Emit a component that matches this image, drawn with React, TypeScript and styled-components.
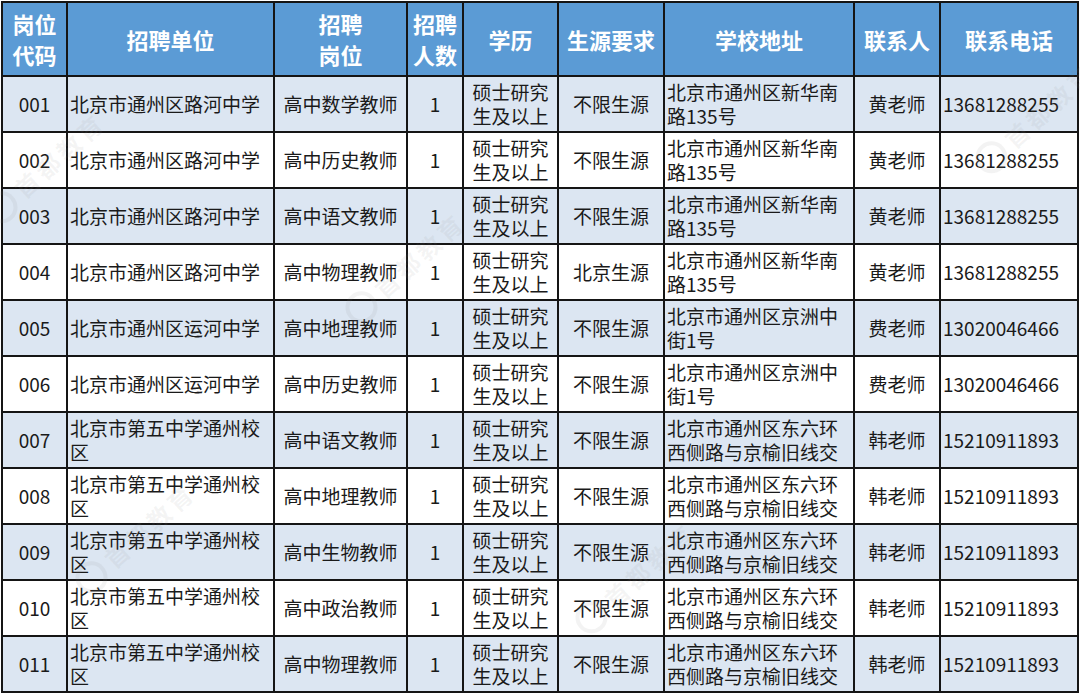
import React from "react";
import styled, { createGlobalStyle } from "styled-components";

const GlobalStyle = createGlobalStyle`
  html, body {
    margin: 0;
    padding: 0;
    background: #ffffff;
  }
  body {
    font-family: "Noto Sans CJK SC", "Noto Sans", sans-serif;
    color: #1a1a1a;
  }
`;

const Page = styled.div`
  position: relative;
  width: 1080px;
  height: 695px;
  padding: 1px 0 0 1px;
  box-sizing: border-box;
  overflow: hidden;
`;

const Table = styled.table`
  width: 1076px;
  border-collapse: collapse;
  table-layout: fixed;
`;

const HeadCell = styled.th`
  height: 72px;
  padding: 0;
  background: #5b9bd5;
  color: #ffffff;
  font-size: 22px;
  font-weight: 700;
  line-height: 31px;
  text-align: center;
  border: 2px solid #151515;
  white-space: nowrap;
`;

const Row = styled.tr<{ $shade: boolean }>`
  background: ${(p) => (p.$shade ? "#dce6f2" : "#ffffff")};
`;

const Cell = styled.td<{ $align?: "left" | "center" }>`
  height: 54px;
  padding: ${(p) => (p.$align === "left" ? "0 0 0 2px" : "0")};
  font-size: 19px;
  line-height: 24px;
  text-align: ${(p) => p.$align ?? "center"};
  vertical-align: middle;
  border: 2px solid #151515;
  word-break: break-all;
`;

const Watermark = styled.div`
  position: absolute;
  display: flex;
  align-items: center;
  gap: 6px;
  transform: rotate(-42deg);
  color: rgba(140, 140, 140, 0.09);
  font-size: 24px;
  font-weight: 700;
  letter-spacing: 4px;
  pointer-events: none;
  white-space: nowrap;
  z-index: 1;
`;

const Seal = styled.span`
  width: 32px;
  height: 32px;
  border-radius: 50%;
  border: 4px solid rgba(140, 140, 140, 0.1);
  box-sizing: border-box;
`;

type Item = {
  code: string;
  unit: string;
  post: string;
  source: string;
  addr: string;
  person: string;
  phone: string;
};

const luhe = "北京市通州区路河中学";
const luheAddr = "北京市通州区新华南路135号";
const yunhe = "北京市通州区运河中学";
const yunheAddr = "北京市通州区京洲中街1号";
const wuzhong = "北京市第五中学通州校区";
const wuzhongAddr = "北京市通州区东六环西侧路与京榆旧线交";

const rows: Item[] = [
  { code: "001", unit: luhe, post: "高中数学教师", source: "不限生源", addr: luheAddr, person: "黄老师", phone: "13681288255" },
  { code: "002", unit: luhe, post: "高中历史教师", source: "不限生源", addr: luheAddr, person: "黄老师", phone: "13681288255" },
  { code: "003", unit: luhe, post: "高中语文教师", source: "不限生源", addr: luheAddr, person: "黄老师", phone: "13681288255" },
  { code: "004", unit: luhe, post: "高中物理教师", source: "北京生源", addr: luheAddr, person: "黄老师", phone: "13681288255" },
  { code: "005", unit: yunhe, post: "高中地理教师", source: "不限生源", addr: yunheAddr, person: "费老师", phone: "13020046466" },
  { code: "006", unit: yunhe, post: "高中历史教师", source: "不限生源", addr: yunheAddr, person: "费老师", phone: "13020046466" },
  { code: "007", unit: wuzhong, post: "高中语文教师", source: "不限生源", addr: wuzhongAddr, person: "韩老师", phone: "15210911893" },
  { code: "008", unit: wuzhong, post: "高中地理教师", source: "不限生源", addr: wuzhongAddr, person: "韩老师", phone: "15210911893" },
  { code: "009", unit: wuzhong, post: "高中生物教师", source: "不限生源", addr: wuzhongAddr, person: "韩老师", phone: "15210911893" },
  { code: "010", unit: wuzhong, post: "高中政治教师", source: "不限生源", addr: wuzhongAddr, person: "韩老师", phone: "15210911893" },
  { code: "011", unit: wuzhong, post: "高中物理教师", source: "不限生源", addr: wuzhongAddr, person: "韩老师", phone: "15210911893" },
];

const widths = [65, 207, 133, 56, 95, 106, 190, 86, 138];

const marks = [
  { x: -30, y: 150 },
  { x: 330, y: 250 },
  { x: 60, y: 520 },
  { x: 560, y: 560 },
  { x: 960, y: 100 },
];

const App = () => {
  return (
    <Page>
      <GlobalStyle />
      <Table>
        <colgroup>
          {widths.map((w, i) => (
            <col key={i} style={{ width: w }} />
          ))}
        </colgroup>
        <thead>
          <tr>
            <HeadCell>岗位<br />代码</HeadCell>
            <HeadCell>招聘单位</HeadCell>
            <HeadCell>招聘<br />岗位</HeadCell>
            <HeadCell>招聘<br />人数</HeadCell>
            <HeadCell>学历</HeadCell>
            <HeadCell>生源要求</HeadCell>
            <HeadCell>学校地址</HeadCell>
            <HeadCell>联系人</HeadCell>
            <HeadCell>联系电话</HeadCell>
          </tr>
        </thead>
        <tbody>
          {rows.map((r, i) => (
            <Row key={r.code} $shade={i % 2 === 0}>
              <Cell>{r.code}</Cell>
              <Cell $align="left">{r.unit}</Cell>
              <Cell>{r.post}</Cell>
              <Cell>1</Cell>
              <Cell>硕士研究<br />生及以上</Cell>
              <Cell>{r.source}</Cell>
              <Cell $align="left">{r.addr}</Cell>
              <Cell>{r.person}</Cell>
              <Cell $align="left">{r.phone}</Cell>
            </Row>
          ))}
        </tbody>
      </Table>
      {marks.map((m, i) => (
        <Watermark key={i} style={{ left: m.x, top: m.y }}>
          <Seal />
          首都教育
        </Watermark>
      ))}
    </Page>
  );
};

export default App;
